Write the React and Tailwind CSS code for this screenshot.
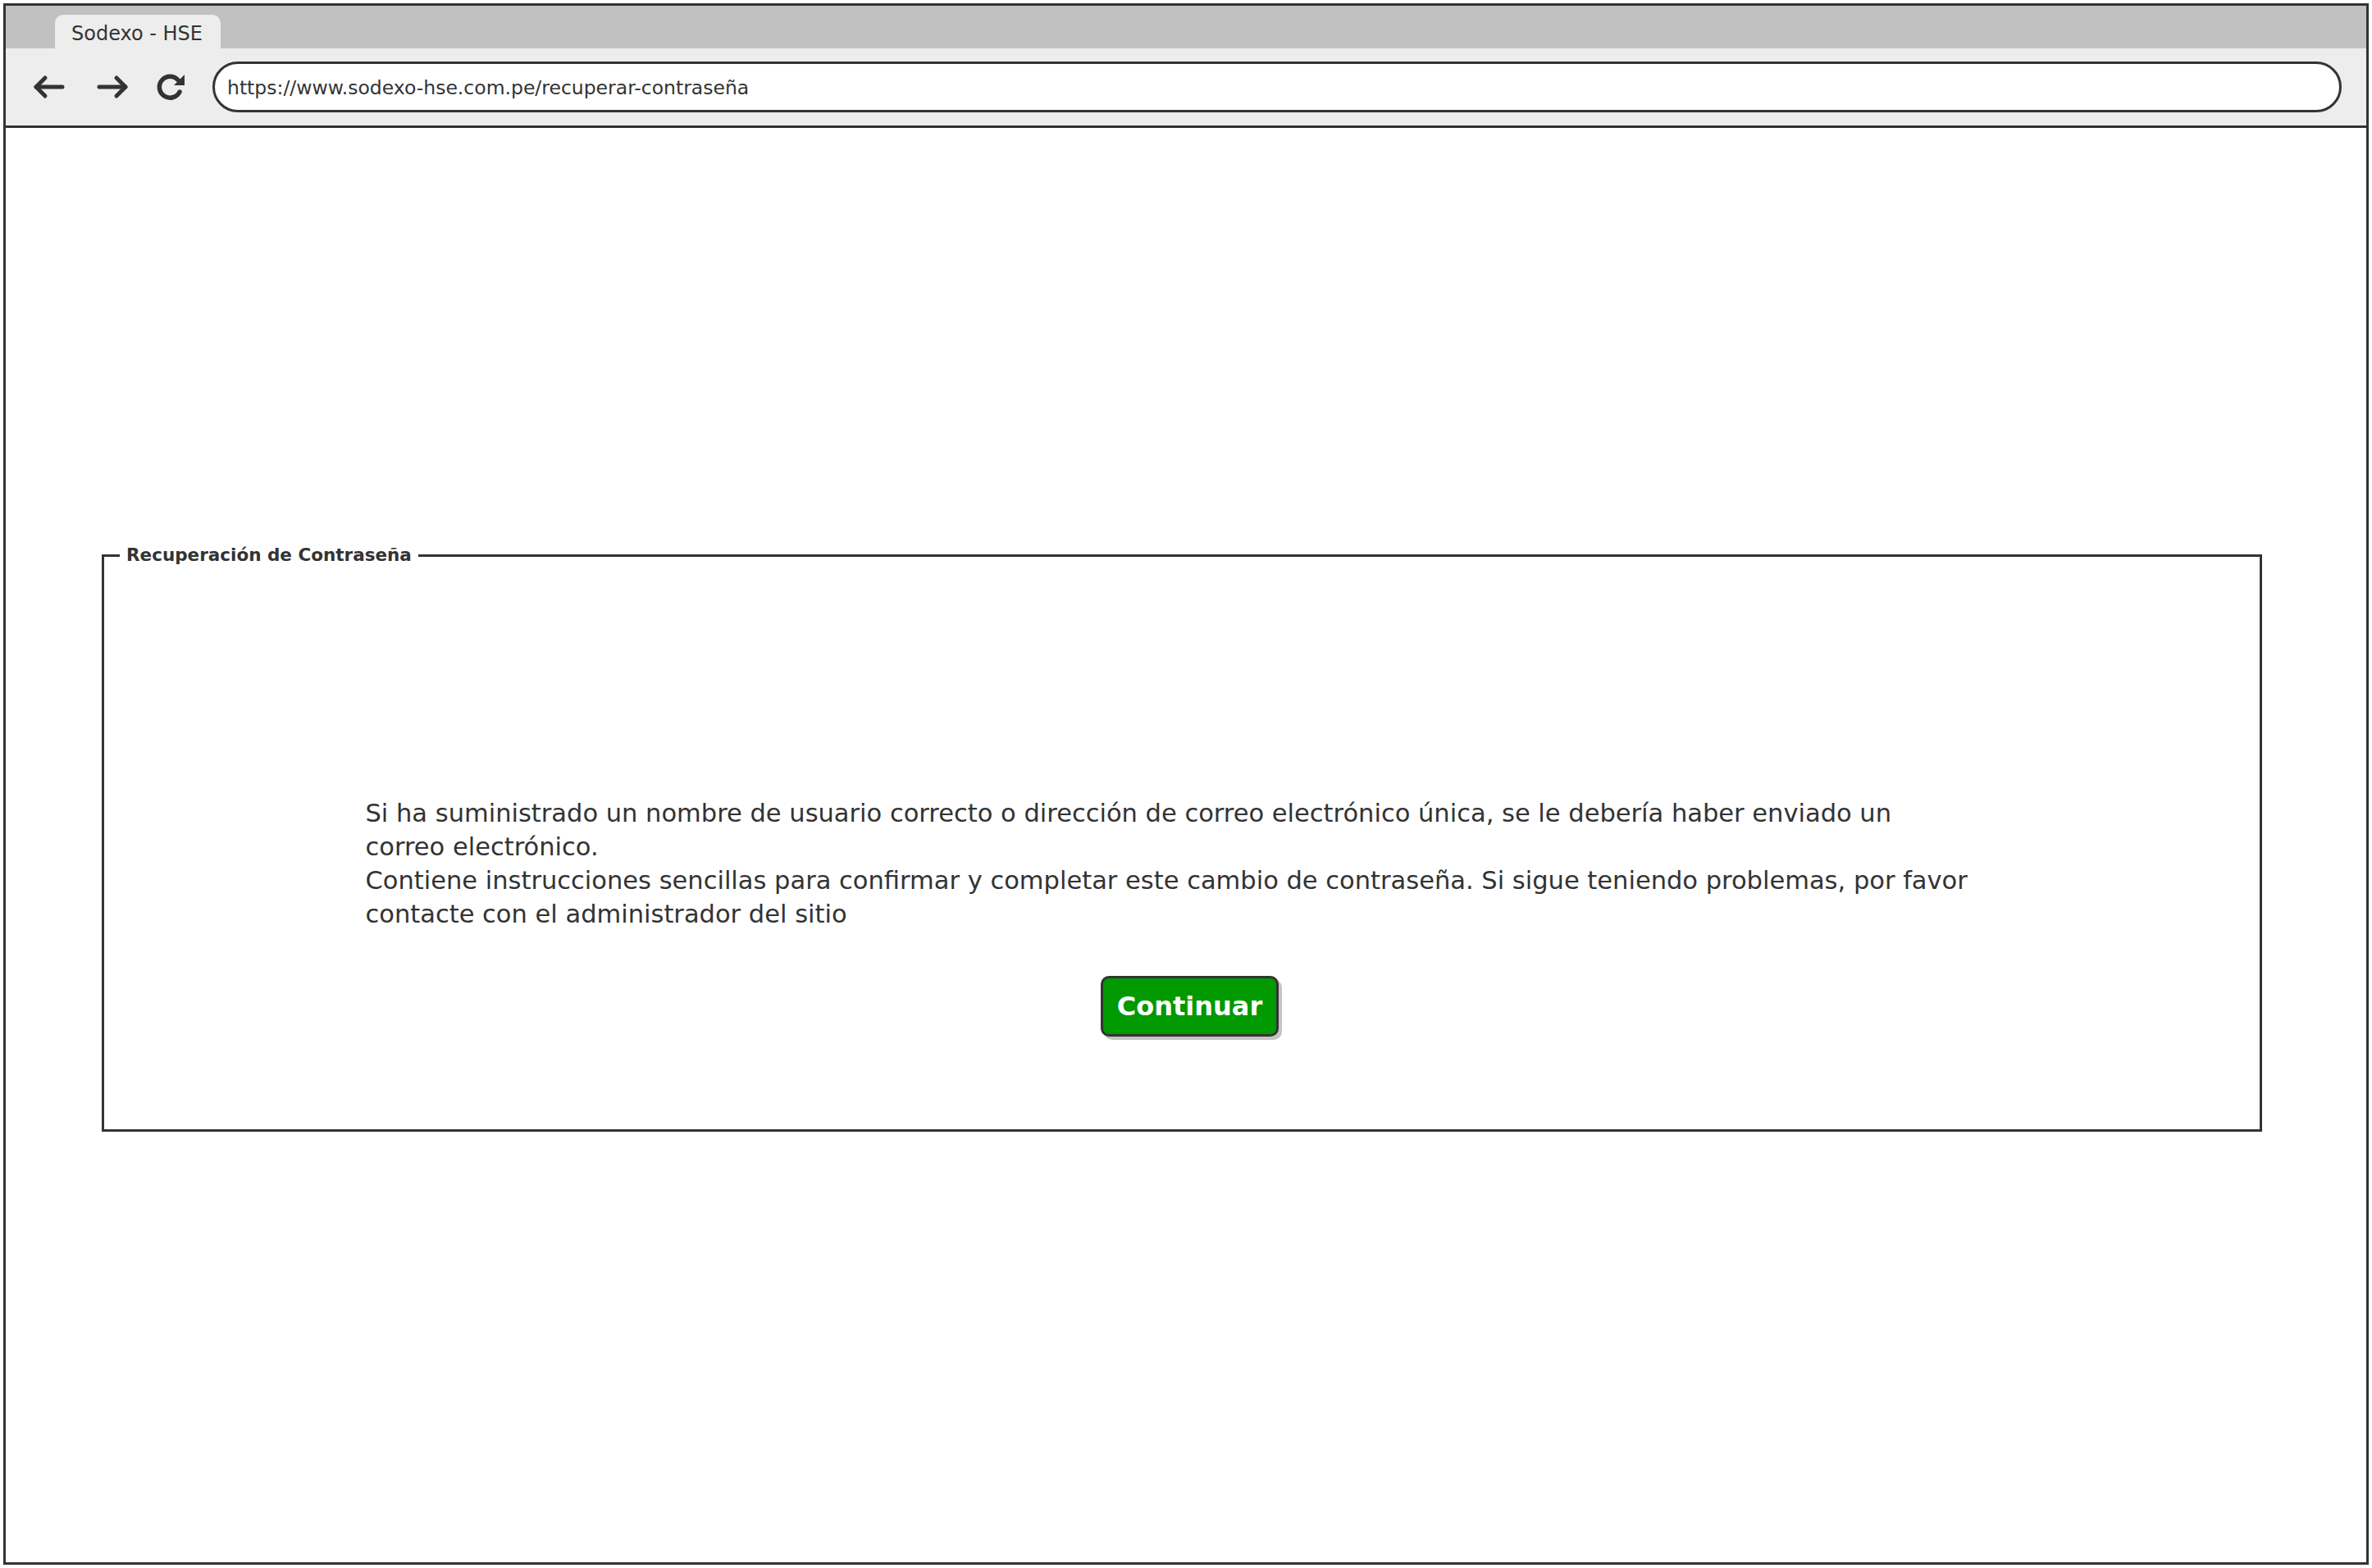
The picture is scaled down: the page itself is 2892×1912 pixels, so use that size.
import React from 'react';

const ArrowIcon = ({ flip }) => (
  <svg
    width="40"
    height="30"
    viewBox="0 0 40 30"
    fill="none"
    stroke="#333"
    strokeWidth="5"
    strokeLinecap="round"
    strokeLinejoin="round"
    className={flip ? '-scale-x-100' : ''}
  >
    <path d="M36 15H4" />
    <path d="M15 4L4 15l11 11" />
  </svg>
);

const ReloadIcon = () => (
  <svg width="38" height="36" viewBox="0 0 38 36" fill="none">
    <path
      d="M27 9.5A13 13 0 1 0 29 24"
      stroke="#333"
      strokeWidth="5.5"
      strokeLinecap="round"
    />
    <path d="M35 3v13H22z" fill="#333" />
  </svg>
);

const lines = [
  'Si ha suministrado un nombre de usuario correcto o dirección de correo electrónico única, se le debería haber enviado un',
  'correo electrónico.',
  'Contiene instrucciones sencillas para confirmar y completar este cambio de contraseña. Si sigue teniendo problemas, por favor',
  'contacte con el administrador del sitio',
];

export default function App() {
  return (
    <div
      className="w-[2892px] h-[1912px] bg-white p-[4px] text-[#333]"
      style={{ fontFamily: '"DejaVu Sans", "Liberation Sans", sans-serif' }}
    >
      <div className="h-full border-[3px] border-[#333] flex flex-col">
        {/* tab strip */}
        <div className="h-[52px] bg-[#c1c1c1] flex items-end pl-[60px]">
          <div className="h-[41px] w-[202px] bg-[#ededed] rounded-t-[10px] flex items-center pl-[20px] pt-[5px] text-[24px]">
            Sodexo - HSE
          </div>
        </div>

        {/* toolbar */}
        <div className="h-[97px] bg-[#ededed] border-b-[3px] border-[#333] flex items-center pl-[33px] pr-[30px]">
          <ArrowIcon />
          <div className="ml-[37px]">
            <ArrowIcon flip />
          </div>
          <div className="ml-[33px]">
            <ReloadIcon />
          </div>
          <div className="ml-[31px] flex-1 h-[62px] bg-white border-[3px] border-[#333] rounded-full flex items-center pl-[15px] pt-[4px] text-[23.5px]">
            https://www.sodexo-hse.com.pe/recuperar-contraseña
          </div>
        </div>

        {/* page */}
        <div className="flex-1 pt-[508px] pl-[117px] pr-[127px]">
          <fieldset className="h-[716px] border-[3px] border-[#333] pl-[19px] pt-[281px]">
            <legend className="px-[8px] text-[21.5px] leading-[26px] font-bold">
              Recuperación de Contraseña
            </legend>
            <div className="w-[2010px] mx-auto text-[30.5px] leading-[41px]">
              {lines.map((l) => (
                <div key={l} className="whitespace-nowrap">
                  {l}
                </div>
              ))}
            </div>
            <div className="flex justify-center mt-[55px]">
              <button className="w-[217px] h-[74px] bg-[#009900] border-[3px] border-[#333] rounded-[10px] shadow-[4px_4px_0_#c4c4c4] text-white font-bold text-[32px]">
                Continuar
              </button>
            </div>
          </fieldset>
        </div>
      </div>
    </div>
  );
}
